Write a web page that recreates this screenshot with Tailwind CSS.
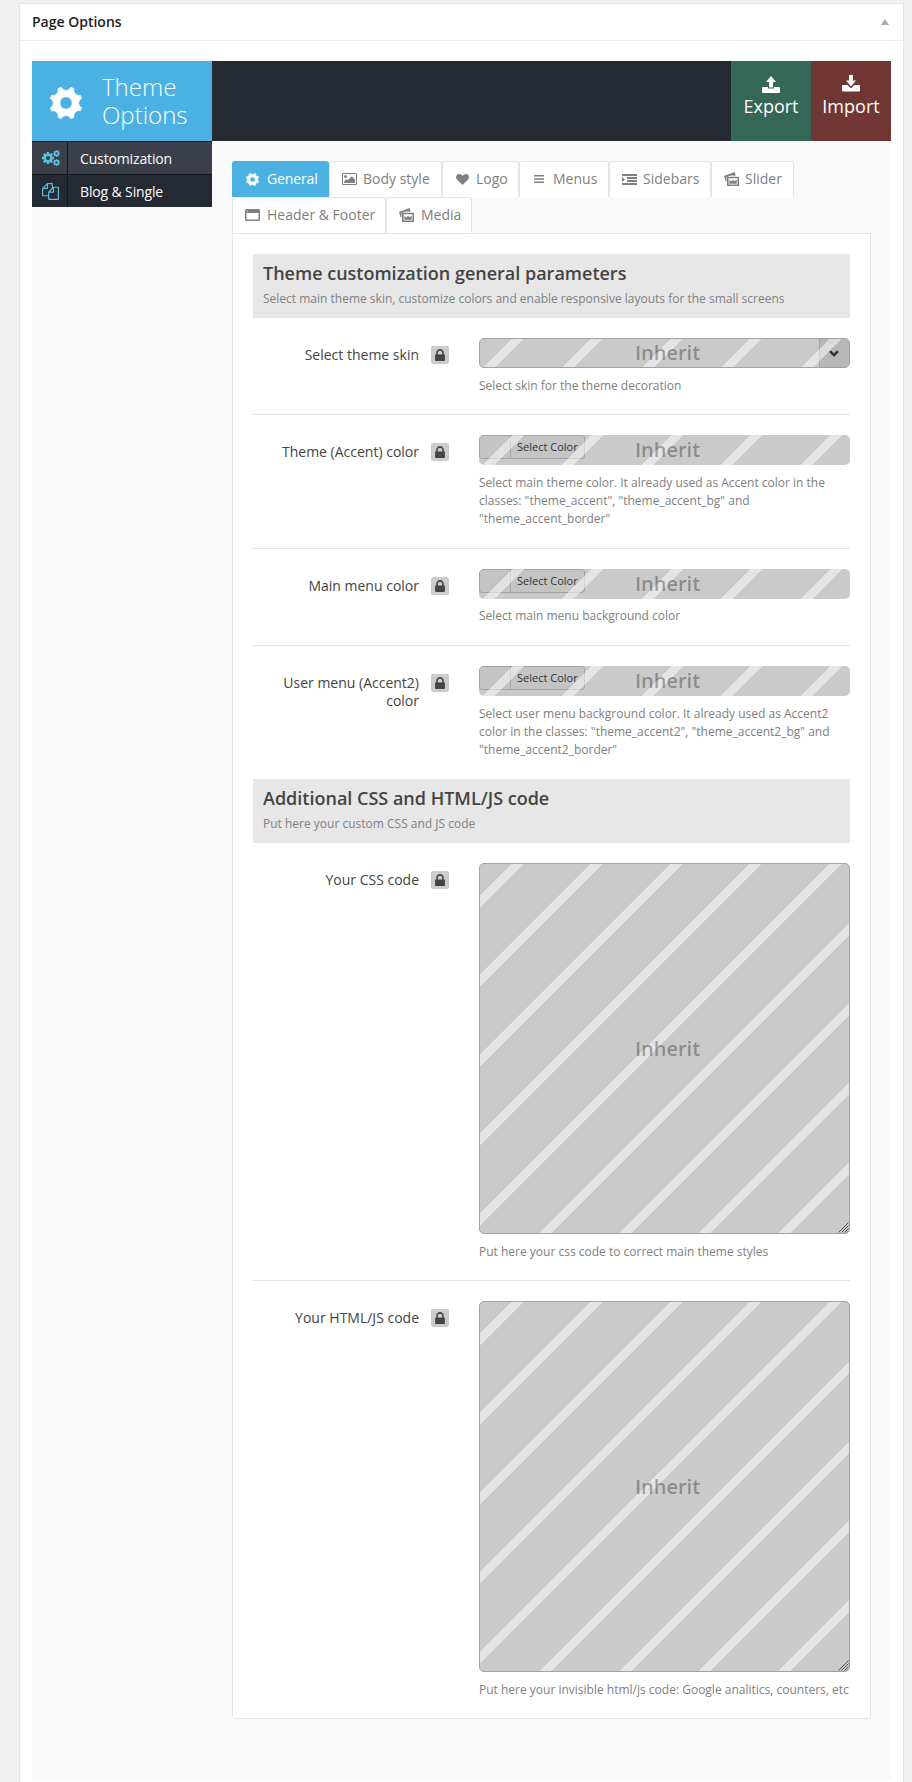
<!DOCTYPE html>
<html lang="en">
<head>
<meta charset="utf-8">
<title>Page Options</title>
<script src="https://cdn.jsdelivr.net/npm/@tailwindcss/browser@4"></script>
</head>
<body class="h-[1782px] overflow-hidden bg-[#f1f1f1] font-['Open_Sans',sans-serif] text-[#444]">
<svg class="hidden">
  <symbol id="cog" viewBox="1.4 1.4 17.2 17.2"><path d="M16.783 10c0-1.049.646-1.875 1.617-2.443-.176-.584-.407-1.145-.692-1.672-1.089.285-1.97-.141-2.711-.883-.741-.74-.968-1.621-.683-2.711-.527-.285-1.088-.518-1.672-.691C12.074 2.57 11.047 3.215 10 3.215c-1.048 0-2.074-.645-2.643-1.615-.585.173-1.144.406-1.671.691.285 1.09.059 1.971-.684 2.711-.74.742-1.621 1.168-2.711.883C2.006 6.412 1.774 6.973 1.6 7.557 2.57 8.125 3.215 8.951 3.215 10c0 1.047-.645 2.074-1.615 2.643.175.584.406 1.144.691 1.672 1.09-.285 1.971-.059 2.711.682s.969 1.623.684 2.711c.527.285 1.087.518 1.672.693.568-.973 1.595-1.617 2.643-1.617 1.047 0 2.074.645 2.643 1.617.584-.176 1.144-.408 1.672-.693-.285-1.088-.059-1.969.683-2.711.741-.74 1.622-1.166 2.711-.883.285-.527.517-1.086.692-1.672C17.429 11.873 16.783 11.047 16.783 10zM10 13.300c-1.800 0-3.300-1.500-3.300-3.300 0-1.800 1.500-3.300 3.300-3.300 1.800 0 3.300 1.500 3.300 3.300 0 1.800-1.500 3.300-3.300 3.300z" stroke="#fff" stroke-width=".4"/></symbol>
  <symbol id="gear" viewBox="128 128 1536 1536"><path d="M1152 896q0-106-75-181t-181-75-181 75-75 181 75 181 181 75 181-75 75-181zm512-109v222q0 12-8 23t-20 13l-185 28q-19 54-39 91 35 50 107 138 10 12 10 25t-9 23q-27 37-99 108t-94 71q-12 0-26-9l-138-108q-44 23-91 38-16 136-29 186-7 28-36 28h-222q-14 0-24.500-8.500t-11.500-21.500l-28-184q-49-16-90-37l-141 107q-10 9-25 9-14 0-25-11-126-114-165-168-7-10-7-23 0-12 8-23 15-21 51-66.500t54-70.500q-27-50-41-99l-183-27q-13-2-21-12.500t-8-23.500v-222q0-12 8-23t19-13l186-28q14-46 39-92-40-57-107-138-10-12-10-24 0-10 9-23 26-36 98.500-107.500t94.500-71.500q13 0 26 10l138 107q44-23 91-38 16-136 29-186 7-28 36-28h222q14 0 24.500 8.500t11.500 21.500l28 184q49 16 90 37l142-107q9-9 24-9 13 0 25 10 129 119 165 170 7 8 7 22 0 12-8 23-15 21-51 66.500t-54 70.500q26 50 41 98l183 28q13 2 21 12.500t8 23.500z"/></symbol>
  <symbol id="lock" viewBox="320 128 1152 1408"><path d="M640 768h512v-192q0-106-75-181t-181-75-181 75-75 181v192zm832 96v576q0 40-28 68t-68 28h-960q-40 0-68-28t-28-68v-576q0-40 28-68t68-28h32v-192q0-184 132-316t316-132 316 132 132 316v192h32q40 0 68 28t28 68z"/></symbol>
  <symbol id="photos" viewBox="0 0 15 14"><path d="M0 4L10.600 0l1.200 3.600H9.900l-.5-1.300-6.900 2.600V9.500H1.800z"/><path d="M2.500 3.600L10 1l1 2.600H4.500L3 5.500z"/><path fill-rule="evenodd" d="M3 4.700h12V14H3zm1.600 1.500v6.300h8.900V6.200z"/><path d="M5.300 11.700V8l2 1.600 1.800-1.800 1.600 1.400 2-1.600v4.100z"/></symbol>
  <symbol id="grip" viewBox="0 0 11 11"><path d="M.5 10.500l10-10M3.500 10.500l7-7M6.500 10.500l4-4M9 10.500l1.500-1.500" stroke="#555" stroke-width="1" fill="none"/></symbol>
</svg>

<div class="mr-2 ml-[19px] mt-[3px] h-[1790px] border border-[#e5e5e5] bg-white w-[885px]">
  <div class="flex h-[37px] items-center justify-between border-b border-[#eee] pl-3 pr-[14px]">
    <h2 class="text-[14px] leading-[18px] font-semibold text-[#222]">Page Options</h2>
    <svg class="h-[6px] w-2 fill-[#aaa]" viewBox="0 0 8 6"><path d="M4 0l4 6H0z"/></svg>
  </div>

  <div class="mt-5 ml-3 h-[1719px] w-[859px] bg-[#fafafa]">
    <div class="flex h-20 bg-[#252932] text-white">
      <div class="flex w-[180px] items-center bg-[#4bb1e2]">
        <svg class="ml-[18px] mt-[3px] size-[32px] fill-white"><use href="#cog"/></svg>
        <h1 class="ml-5 text-[24px] leading-[28px] font-light">Theme<br>Options</h1>
      </div>
      <div class="ml-auto flex w-20 flex-col items-center bg-[#356756] pt-[15px]">
        <svg class="h-[17px] w-[18px] fill-white" viewBox="0 0 18 17"><path d="M9 0l5 6h-3v5.500H7V6H4zM0 12q0-1 1-1h5v1.500h6V11h5q1 0 1 1v4q0 1-1 1H1q-1 0-1-1z"/><path d="M12 14h1v1h-1zm2.500 0h1v1h-1z" fill="#b9cbc5"/></svg>
        <span class="text-[18px] leading-[26px]">Export</span>
      </div>
      <div class="flex w-20 flex-col items-center bg-[#703634] pt-[14px]">
        <svg class="h-[17px] w-[18px] fill-white" viewBox="0 0 18 17"><path d="M7 0h4v5.500h3l-5 6-5-6h3zM0 11q0-1 1-1h4.500L9 13.500 12.500 10H17q1 0 1 1v4.500q0 1-1 1H1q-1 0-1-1z"/><path d="M12 13.500h1v1h-1zm2.500 0h1v1h-1z" fill="#cdb9b8"/></svg>
        <span class="text-[18px] leading-[26px] mt-px">Import</span>
      </div>
    </div>

    <div class="flex items-start">
      <nav class="w-[180px] bg-[#252932] text-[14px] font-medium tracking-[-0.01em] text-white">
        <a class="flex h-[33px] border-t border-[#15171c] bg-[#3a3f49]">
          <span class="flex w-9 items-center justify-center border-r border-[#15171c]">
            <svg class="ml-[2px] h-4 w-[18px] fill-[#5bc0de]" viewBox="0 0 18 16"><use href="#gear" x="0" y="2" width="12" height="12"/><use href="#gear" x="11" y="0" width="7" height="7"/><use href="#gear" x="11" y="9" width="7" height="7"/></svg>
          </span>
          <span class="pl-3 leading-[34px]">Customization</span>
        </a>
        <a class="flex h-[33px] border-t border-[#15171c]">
          <span class="flex w-9 items-center justify-center border-r border-[#15171c]">
            <svg class="ml-[2px] size-[17px] fill-[#5bc0de]" viewBox="0 0 1792 1792"><path d="M1696 384q40 0 68 28t28 68v1216q0 40-28 68t-68 28h-960q-40 0-68-28t-28-68v-288h-544q-40 0-68-28t-28-68v-672q0-40 20-88t48-76l408-408q28-28 76-48t88-20h416q40 0 68 28t28 68v328q68-40 128-40h416zm-544 213l-299 299h299v-299zm-640-384l-299 299h299v-299zm196 647l316-316v-416h-384v416q0 40-28 68t-68 28h-416v640h512v-256q0-40 20-88t48-76zm956 804v-1152h-384v416q0 40-28 68t-68 28h-416v640h896z"/></svg>
          </span>
          <span class="pl-3 leading-[34px]">Blog &amp; Single</span>
        </a>
      </nav>

      <main class="ml-5 mt-5 w-[639px]">
        <div class="flex flex-wrap text-[14px] leading-[34px] text-[#808080] fill-[#808080]">
          <div class="flex h-9 w-[97px] items-center rounded-t-[3px] bg-[#4bb1e2] pl-[14px] font-medium tracking-[-0.01em] text-white"><svg class="mr-2 size-[13px] fill-white"><use href="#cog"/></svg>General</div>
          <div class="flex h-9 w-[113px] items-center rounded-t-[3px] border border-b-0 border-[#e5e5e5] bg-white pb-px pl-3"><svg class="mr-[6px] h-3 w-[15px]" viewBox="-64 128 1920 1536"><path d="M576 576q0 80-56 136t-136 56-136-56-56-136 56-136 136-56 136 56 56 136zm1024 384v448h-1408v-192l320-320 160 160 512-512zm96-704h-1600q-13 0-22.500 9.500t-9.500 22.500v1216q0 13 9.500 22.500t22.500 9.500h1600q13 0 22.500-9.500t9.500-22.500v-1216q0-13-9.500-22.500t-22.500-9.500zm160 32v1216q0 66-47 113t-113 47h-1600q-66 0-113-47t-47-113v-1216q0-66 47-113t113-47h1600q66 0 113 47t47 113z"/></svg>Body style</div>
          <div class="flex h-9 w-[77px] items-center rounded-t-[3px] border border-b-0 border-[#e5e5e5] bg-white pb-px pl-[13px]"><svg class="mr-[7px] h-[11px] w-[13px]" viewBox="0 0 13 11"><path d="M6.500 11L.9 5.500C-.4 4-.2 1.800 1 .8 2.600-.6 5.300-.1 6.500 2 7.700-.1 10.400-.6 12 .8c1.200 1 1.400 3.200.1 4.700z"/></svg>Logo</div>
          <div class="flex h-9 w-[90px] items-center rounded-t-[3px] border border-b-0 border-[#e5e5e5] bg-white pb-px pl-[14px]"><svg class="mr-[9px] h-2 w-[10px]" viewBox="0 0 10 8"><path d="M0 0h10v1.500H0zm0 3.200h10v1.600H0zm0 3.300h10V8H0z"/></svg>Menus</div>
          <div class="flex h-9 w-[102px] items-center rounded-t-[3px] border border-b-0 border-[#e5e5e5] bg-white pb-px pl-3"><svg class="mr-[6px] h-[11px] w-[15px]" viewBox="0 0 15 11"><path d="M0 0h15v2H0zm5 3h10v2H5zm0 3h10v2H5zM0 9h15v2H0zM0 3l3 2.500L0 8z"/></svg>Sidebars</div>
          <div class="flex h-9 w-[83px] items-center rounded-t-[3px] border border-b-0 border-[#e5e5e5] bg-white pb-px pl-3"><svg class="mr-[6px] h-[14px] w-[15px]"><use href="#photos"/></svg>Slider</div>
          <div class="w-[77px]"></div>
          <div class="flex h-9 w-[154px] items-center rounded-t-[3px] border border-b-0 border-[#e5e5e5] bg-white pb-px pl-3"><svg class="mr-[7px] h-3 w-[15px]" viewBox="0 0 15 12"><path fill-rule="evenodd" d="M1.500 0h12Q15 0 15 1.500v9q0 1.500-1.500 1.500h-12Q0 12 0 10.500v-9Q0 0 1.500 0zm0 4v6.500h12V4zm.3-2.300v1h1v-1z"/></svg>Header &amp; Footer</div>
          <div class="flex h-9 w-[86px] items-center rounded-t-[3px] border border-b-0 border-[#e5e5e5] bg-white pb-px pl-3"><svg class="mr-[7px] h-[14px] w-[15px]"><use href="#photos"/></svg>Media</div>
        </div>

        <div class="h-[1486px] rounded-b-[3px] border border-[#e5e5e5] bg-white px-5 pt-5">
          <div class="h-16 bg-[#e7e7e7] px-[10px] pt-[6px]">
            <h3 class="text-[18px] leading-[26px] font-semibold">Theme customization general parameters</h3>
            <p class="mt-1 text-[12px] leading-[18px] text-[#808080]">Select main theme skin, customize colors and enable responsive layouts for the small screens</p>
          </div>

          <div class="mt-5 flex h-[77px] border-b border-[#e5e5e5]">
            <label class="mt-2 w-[166px] pl-5 text-right text-[14px] leading-[18px]">Select theme skin</label>
            <span class="mt-2 ml-3 flex size-[18px] items-center justify-center rounded-[2px] bg-[#ccc]"><svg class="mb-px h-3 w-[10px] fill-[#444]"><use href="#lock"/></svg></span>
            <div class="ml-[30px] w-[371px]">
              <div class="relative flex h-[30px] items-center justify-center overflow-hidden rounded-[5px] border border-[#a3a3a3] bg-[#cacaca]">
                <span class="absolute inset-y-0 right-0 flex w-[30px] items-center justify-center border-l border-[#a3a3a3] bg-[#b8b8b8]"></span>
                <div class="absolute -inset-px bg-[repeating-linear-gradient(135deg,transparent_0,transparent_23.4px,rgba(255,255,255,.5)_23.6px,rgba(255,255,255,.5)_32px,transparent_32.2px,transparent_56.2px)]"></div>
                <svg class="absolute right-[10px] top-[11px] h-[7px] w-[10px]" viewBox="0 0 10 7"><path d="M1 1.200l4 4 4-4" fill="none" stroke="#333" stroke-width="2.400"/></svg>
                <span class="relative ml-[6px] text-[20px] leading-[28px] font-semibold text-black/32">Inherit</span>
              </div>
              <p class="mt-[9px] text-[12px] leading-[18px] text-[#808080]">Select skin for the theme decoration</p>
            </div>
          </div>

          <div class="mt-5 flex h-[114px] border-b border-[#e5e5e5]">
            <label class="mt-2 w-[166px] pl-5 text-right text-[14px] leading-[18px]">Theme (Accent) color</label>
            <span class="mt-2 ml-3 flex size-[18px] items-center justify-center rounded-[2px] bg-[#ccc]"><svg class="mb-px h-3 w-[10px] fill-[#444]"><use href="#lock"/></svg></span>
            <div class="ml-[30px] w-[371px]">
              <div class="relative flex h-[30px] items-center justify-center overflow-hidden rounded-[5px] bg-[#cacaca]">
                <span class="absolute left-0 top-0 flex h-6 w-[106px] rounded-[3px] border border-[#a3a3a3] bg-[#c4c4c4]"><i class="w-[31px] border-r border-[#a3a3a3]"></i></span>
                <div class="absolute inset-0 bg-[repeating-linear-gradient(135deg,transparent_0,transparent_23.4px,rgba(255,255,255,.5)_23.6px,rgba(255,255,255,.5)_32px,transparent_32.2px,transparent_56.2px)]"></div>
                <span class="absolute left-[38px] top-0 text-[11px] leading-[24px] text-[#333]">Select Color</span>
                <span class="relative ml-[6px] text-[20px] leading-[28px] font-semibold text-black/32">Inherit</span>
              </div>
              <p class="mt-[9px] text-[12px] leading-[18px] text-[#808080]">Select main theme color. It already used as Accent color in the classes: "theme_accent", "theme_accent_bg" and "theme_accent_border"</p>
            </div>
          </div>

          <div class="mt-5 flex h-[77px] border-b border-[#e5e5e5]">
            <label class="mt-2 w-[166px] pl-5 text-right text-[14px] leading-[18px]">Main menu color</label>
            <span class="mt-2 ml-3 flex size-[18px] items-center justify-center rounded-[2px] bg-[#ccc]"><svg class="mb-px h-3 w-[10px] fill-[#444]"><use href="#lock"/></svg></span>
            <div class="ml-[30px] w-[371px]">
              <div class="relative flex h-[30px] items-center justify-center overflow-hidden rounded-[5px] bg-[#cacaca]">
                <span class="absolute left-0 top-0 flex h-6 w-[106px] rounded-[3px] border border-[#a3a3a3] bg-[#c4c4c4]"><i class="w-[31px] border-r border-[#a3a3a3]"></i></span>
                <div class="absolute inset-0 bg-[repeating-linear-gradient(135deg,transparent_0,transparent_23.4px,rgba(255,255,255,.5)_23.6px,rgba(255,255,255,.5)_32px,transparent_32.2px,transparent_56.2px)]"></div>
                <span class="absolute left-[38px] top-0 text-[11px] leading-[24px] text-[#333]">Select Color</span>
                <span class="relative ml-[6px] text-[20px] leading-[28px] font-semibold text-black/32">Inherit</span>
              </div>
              <p class="mt-2 text-[12px] leading-[18px] text-[#808080]">Select main menu background color</p>
            </div>
          </div>

          <div class="mt-5 flex h-[113px]">
            <label class="mt-2 w-[166px] pl-5 text-right text-[14px] leading-[18px]">User menu (Accent2) color</label>
            <span class="mt-2 ml-3 flex size-[18px] items-center justify-center rounded-[2px] bg-[#ccc]"><svg class="mb-px h-3 w-[10px] fill-[#444]"><use href="#lock"/></svg></span>
            <div class="ml-[30px] w-[371px]">
              <div class="relative flex h-[30px] items-center justify-center overflow-hidden rounded-[5px] bg-[#cacaca]">
                <span class="absolute left-0 top-0 flex h-6 w-[106px] rounded-[3px] border border-[#a3a3a3] bg-[#c4c4c4]"><i class="w-[31px] border-r border-[#a3a3a3]"></i></span>
                <div class="absolute inset-0 bg-[repeating-linear-gradient(135deg,transparent_0,transparent_23.4px,rgba(255,255,255,.5)_23.6px,rgba(255,255,255,.5)_32px,transparent_32.2px,transparent_56.2px)]"></div>
                <span class="absolute left-[38px] top-0 text-[11px] leading-[24px] text-[#333]">Select Color</span>
                <span class="relative ml-[6px] text-[20px] leading-[28px] font-semibold text-black/32">Inherit</span>
              </div>
              <p class="mt-[9px] text-[12px] leading-[18px] text-[#808080]">Select user menu background color. It already used as Accent2 color in the classes: "theme_accent2", "theme_accent2_bg" and "theme_accent2_border"</p>
            </div>
          </div>

          <div class="h-16 bg-[#e7e7e7] px-[10px] pt-[6px]">
            <h3 class="text-[18px] leading-[26px] font-semibold">Additional CSS and HTML/JS code</h3>
            <p class="mt-1 text-[12px] leading-[18px] text-[#808080]">Put here your custom CSS and JS code</p>
          </div>

          <div class="mt-5 flex h-[418px] border-b border-[#e5e5e5]">
            <label class="mt-2 w-[166px] pl-5 text-right text-[14px] leading-[18px]">Your CSS code</label>
            <span class="mt-2 ml-3 flex size-[18px] items-center justify-center rounded-[2px] bg-[#ccc]"><svg class="mb-px h-3 w-[10px] fill-[#444]"><use href="#lock"/></svg></span>
            <div class="ml-[30px] w-[371px]">
              <div class="relative flex h-[371px] items-center justify-center overflow-hidden rounded-[5px] border border-[#a3a3a3] bg-[#cacaca]">
                <div class="absolute -inset-px bg-[repeating-linear-gradient(135deg,transparent_0,transparent_23.4px,rgba(255,255,255,.5)_23.6px,rgba(255,255,255,.5)_32px,transparent_32.2px,transparent_56.2px)]"></div>
                <svg class="absolute right-0 bottom-0 size-[11px]"><use href="#grip"/></svg>
                <span class="relative ml-[6px] text-[20px] leading-[28px] font-semibold text-black/32">Inherit</span>
              </div>
              <p class="mt-[9px] text-[12px] leading-[18px] text-[#808080]">Put here your css code to correct main theme styles</p>
            </div>
          </div>

          <div class="mt-5 flex">
            <label class="mt-2 w-[166px] pl-5 text-right text-[14px] leading-[18px]">Your HTML/JS code</label>
            <span class="mt-2 ml-3 flex size-[18px] items-center justify-center rounded-[2px] bg-[#ccc]"><svg class="mb-px h-3 w-[10px] fill-[#444]"><use href="#lock"/></svg></span>
            <div class="ml-[30px] w-[371px]">
              <div class="relative flex h-[371px] items-center justify-center overflow-hidden rounded-[5px] border border-[#a3a3a3] bg-[#cacaca]">
                <div class="absolute -inset-px bg-[repeating-linear-gradient(135deg,transparent_0,transparent_23.4px,rgba(255,255,255,.5)_23.6px,rgba(255,255,255,.5)_32px,transparent_32.2px,transparent_56.2px)]"></div>
                <svg class="absolute right-0 bottom-0 size-[11px]"><use href="#grip"/></svg>
                <span class="relative ml-[6px] text-[20px] leading-[28px] font-semibold text-black/32">Inherit</span>
              </div>
              <p class="mt-[9px] whitespace-nowrap text-[12px] leading-[18px] text-[#808080]">Put here your invisible html/js code: Google analitics, counters, etc</p>
            </div>
          </div>
        </div>
      </main>
    </div>
  </div>
</div>
</body>
</html>
